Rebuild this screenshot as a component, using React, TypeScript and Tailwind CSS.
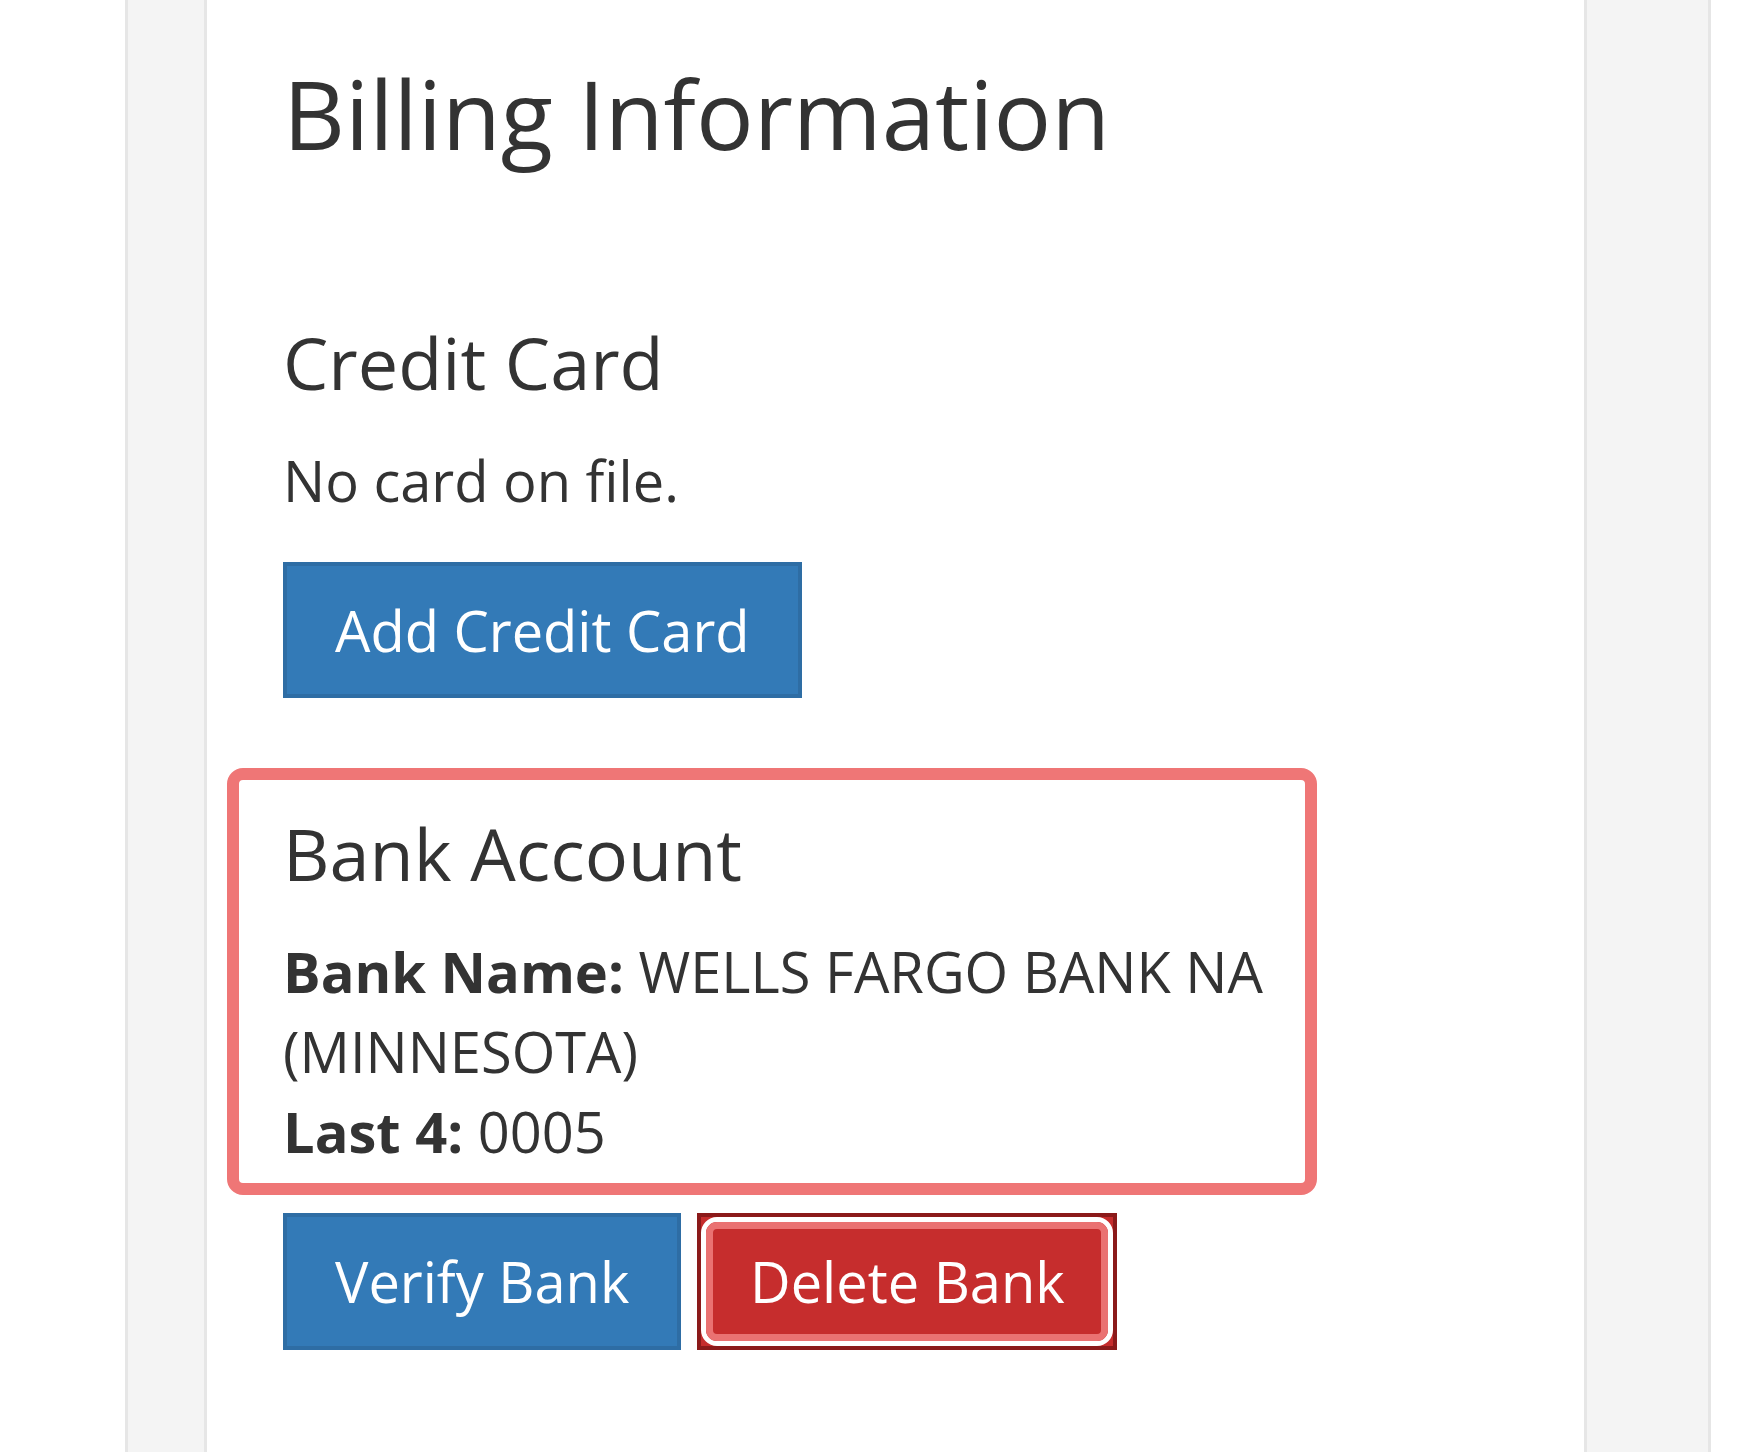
import React from 'react'

const BankDetails = () => (
  <div className="-ml-[56px] mt-[70px] w-[1090px] rounded-[16px] border-[12px] border-[#ef7676] pb-[12px] pl-[44px] pr-[16px] pt-[34px]">
    <h3 className="text-[72px] font-normal leading-[1.1]">Bank Account</h3>
    <p className="mt-[38px] text-[56px] leading-[80px]">
      <strong className="font-bold">Bank Name:</strong> WELLS FARGO BANK NA (MINNESOTA)
    </p>
    <p className="text-[56px] leading-[80px]">
      <strong className="font-bold">Last 4:</strong> 0005
    </p>
  </div>
)

export default function App() {
  return (
    <div className="min-h-screen bg-white font-['Open_Sans',sans-serif] text-[#333]">
      <div className="ml-[125px] flex min-h-[1452px] w-[1586px] border-x-[3px] border-[#e6e6e6] bg-[#f4f4f4] pl-[76px] pr-[121px]">
        <div className="flex-1 border-x-[3px] border-[#e6e6e6] bg-white pl-[76px] pt-[60px]">
          <h1 className="text-[96px] font-normal leading-[1.1]">Billing Information</h1>

          <h3 className="mt-[157px] text-[72px] font-normal leading-[1.1]">Credit Card</h3>
          <p className="mt-[38px] text-[56px] leading-[80px]">No card on file.</p>
          <button className="mt-[42px] border-4 border-[#2e6da4] bg-[#337ab7] px-[48px] py-[24px] text-[56px] leading-[80px] text-white">
            Add Credit Card
          </button>

          <BankDetails />

          <div className="mt-[18px] flex gap-[16px]">
            <button className="border-4 border-[#2e6da4] bg-[#337ab7] px-[48px] py-[24px] text-[56px] leading-[80px] text-white">
              Verify Bank
            </button>
            <button className="flex h-[137px] w-[420px] border-4 border-[#8b1a1a] bg-[#c62d2d] p-0 text-white">
              <span className="flex flex-1 rounded-[16px] border-[5px] border-white">
                <span className="flex flex-1 items-center justify-center rounded-[11px] border-[7px] border-[#ea7272] text-[56px] leading-[80px]">
                  Delete Bank
                </span>
              </span>
            </button>
          </div>
        </div>
      </div>
    </div>
  )
}
